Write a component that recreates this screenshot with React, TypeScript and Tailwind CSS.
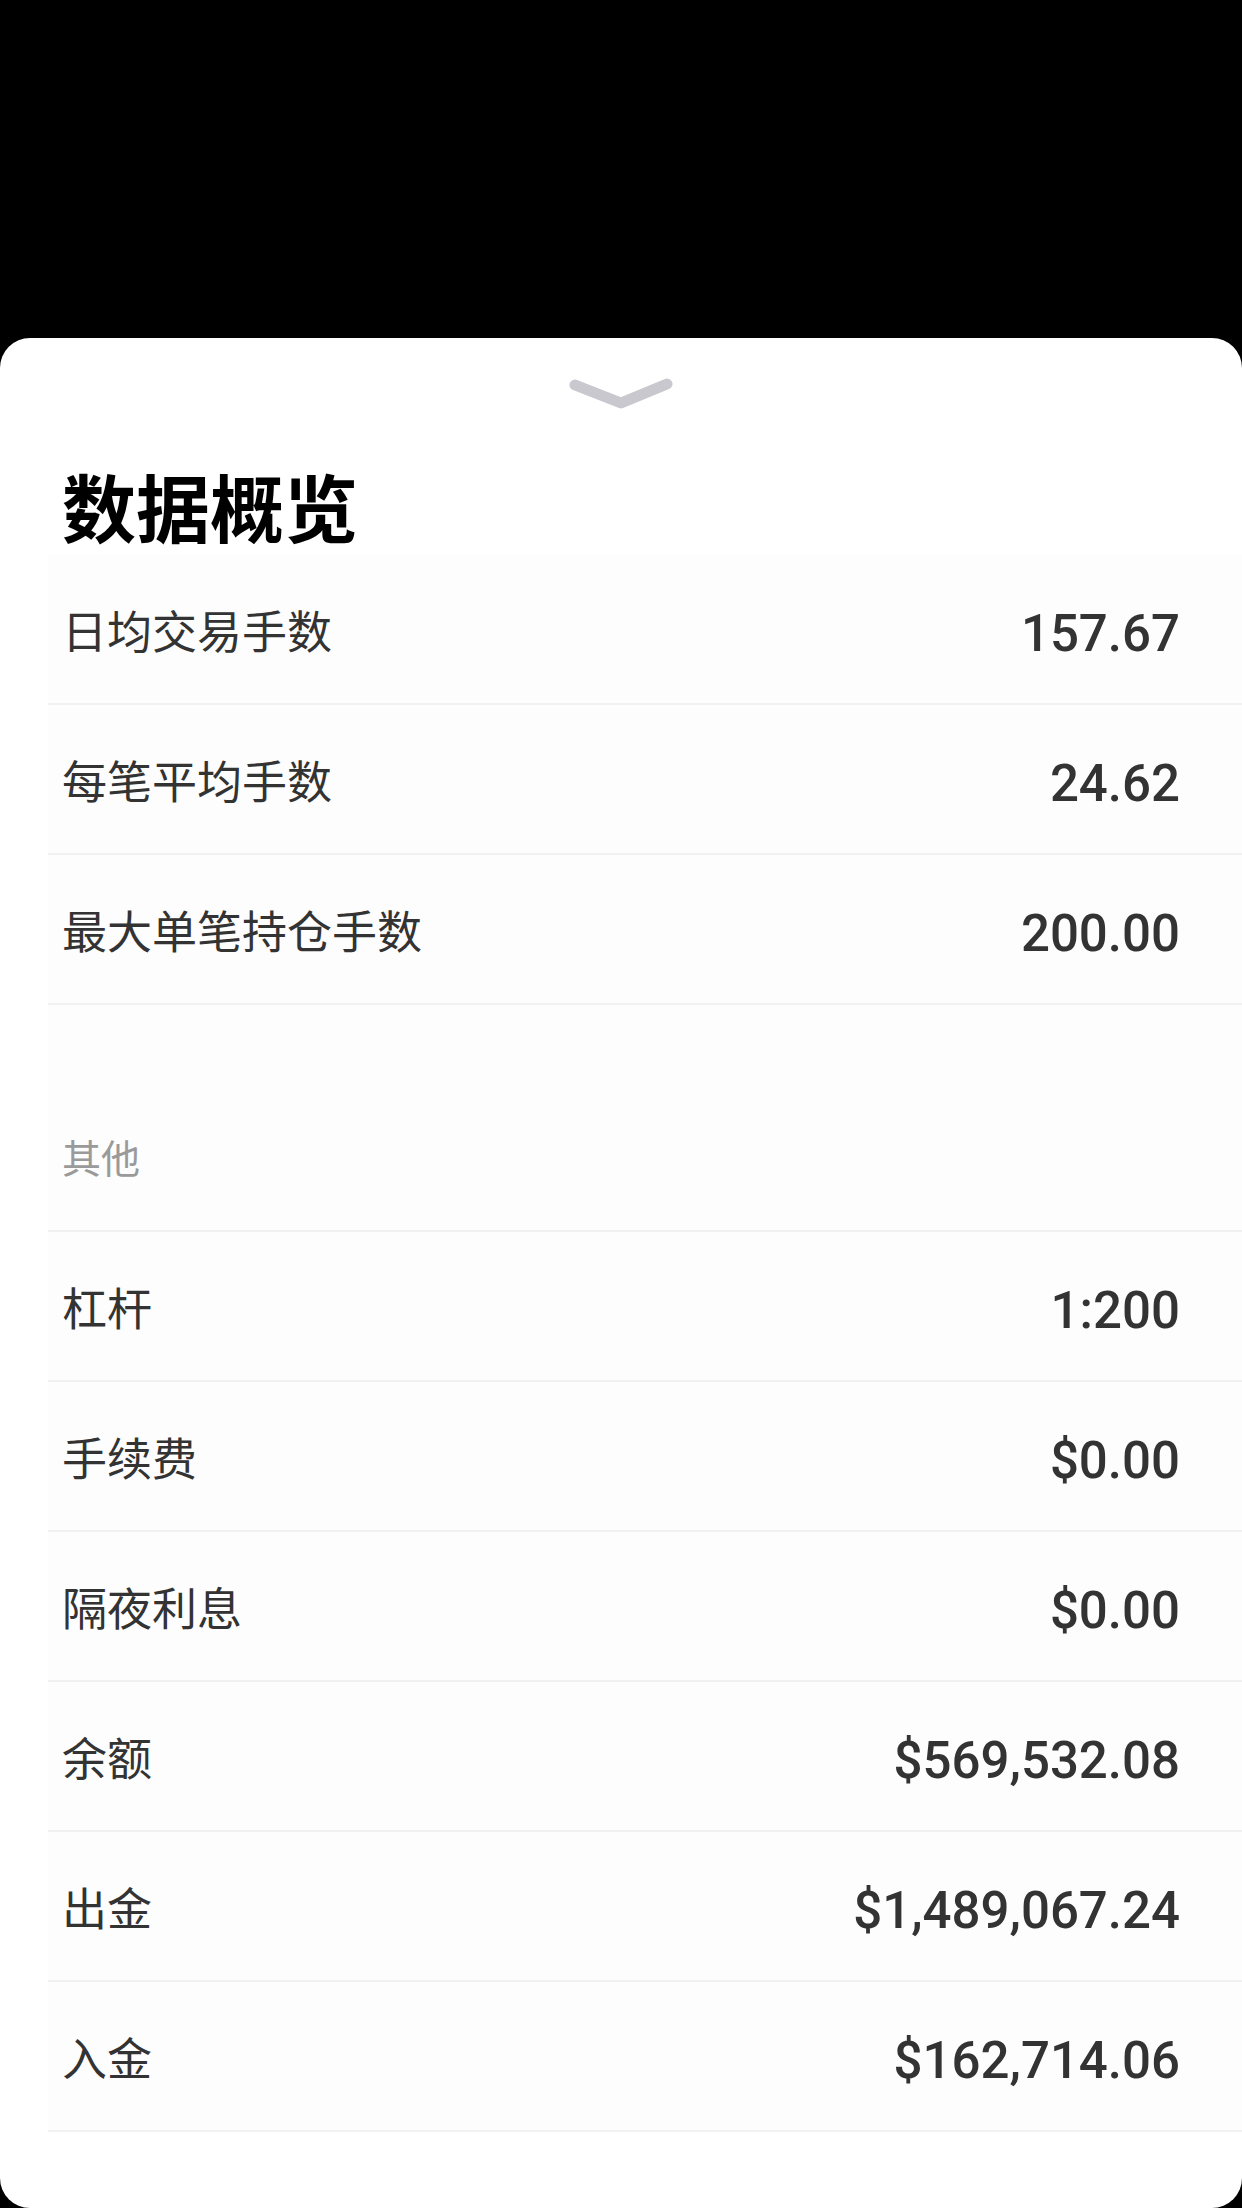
const rowsTop = [
  { label: '日均交易手数', value: '157.67' },
  { label: '每笔平均手数', value: '24.62' },
  { label: '最大单笔持仓手数', value: '200.00' },
];

const rowsOther = [
  { label: '杠杆', value: '1:200' },
  { label: '手续费', value: '$0.00' },
  { label: '隔夜利息', value: '$0.00' },
  { label: '余额', value: '$569,532.08' },
  { label: '出金', value: '$1,489,067.24' },
  { label: '入金', value: '$162,714.06' },
];

const cjk = { fontFamily: '"Noto Sans CJK SC", "Noto Sans", sans-serif' };

const Row = ({ label, value }: { label: string; value: string }) => (
  <div className="h-[150px] flex items-center justify-between pl-[14px] pr-[62px] border-b-2 border-[#f1f1f1]">
    <span className="text-[45px] leading-none text-[#333333]" style={cjk}>
      {label}
    </span>
    <span className="mt-[8px] text-[51px] leading-none font-medium text-[#333333] font-['Roboto','Liberation_Sans',sans-serif]">
      {value}
    </span>
  </div>
);

export default function App() {
  return (
    <div className="w-[1242px] h-[2208px] bg-black flex flex-col pt-[338px] overflow-hidden">
      <div className="flex-1 bg-white rounded-[30px] flex flex-col pt-[39px]">
        {/* drag handle */}
        <div className="flex justify-center">
          <svg width="106" height="33" viewBox="0 0 106 33" fill="none">
            <path
              d="M7 8 L53 26 L99 7"
              stroke="#c8c8ce"
              strokeWidth="11"
              strokeLinecap="round"
              strokeLinejoin="round"
            />
          </svg>
        </div>

        <h1
          className="mt-[58px] pl-[62px] text-[74px] leading-none font-bold text-black"
          style={cjk}
        >
          数据概览
        </h1>

        <div className="mt-[13px] ml-[48px] bg-[#fdfdfd]">
          {rowsTop.map((r) => (
            <Row key={r.label} {...r} />
          ))}

          <div className="h-[227px] pt-[132px] pl-[14px] border-b-2 border-[#f1f1f1]">
            <span className="text-[39px] leading-none text-[#9a9a9a]" style={cjk}>
              其他
            </span>
          </div>

          {rowsOther.map((r) => (
            <Row key={r.label} {...r} />
          ))}
        </div>
      </div>
    </div>
  );
}
